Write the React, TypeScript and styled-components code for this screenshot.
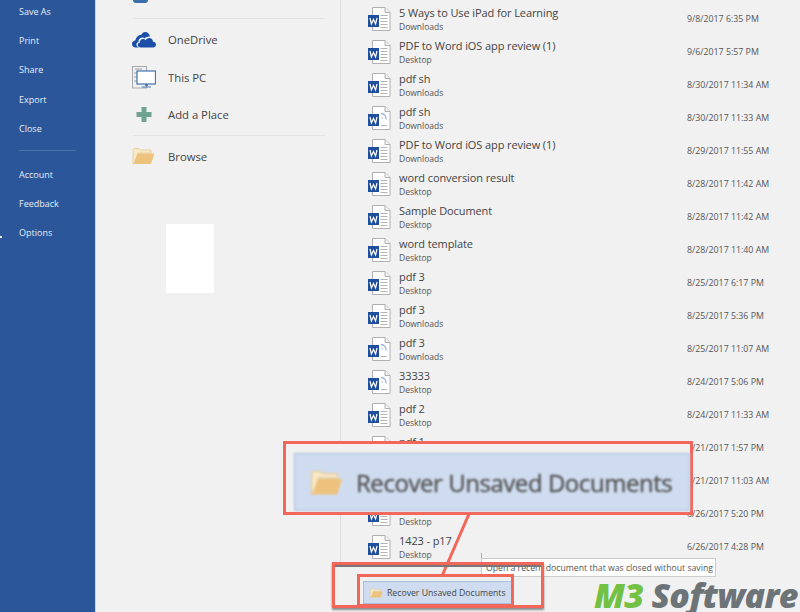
import React from 'react'
import styled, { createGlobalStyle } from 'styled-components'

const GlobalStyle = createGlobalStyle`
  html, body {
    margin: 0;
    padding: 0;
    background: #f1f1f1;
  }
  * {
    box-sizing: border-box;
  }
`

interface RecentFile {
  name: string
  folder: string
  date: string
  pending?: boolean
}

const files: RecentFile[] = [
  { name: '5 Ways to Use iPad for Learning', folder: 'Downloads', date: '9/8/2017 6:35 PM' },
  { name: 'PDF to Word iOS app review (1)', folder: 'Desktop', date: '9/6/2017 5:57 PM' },
  { name: 'pdf sh', folder: 'Downloads', date: '8/30/2017 11:34 AM' },
  { name: 'pdf sh', folder: 'Downloads', date: '8/30/2017 11:33 AM', pending: true },
  { name: 'PDF to Word iOS app review (1)', folder: 'Downloads', date: '8/29/2017 11:55 AM' },
  { name: 'word conversion result', folder: 'Desktop', date: '8/28/2017 11:42 AM' },
  { name: 'Sample Document', folder: 'Desktop', date: '8/28/2017 11:42 AM' },
  { name: 'word template', folder: 'Desktop', date: '8/28/2017 11:40 AM' },
  { name: 'pdf 3', folder: 'Desktop', date: '8/25/2017 6:17 PM' },
  { name: 'pdf 3', folder: 'Downloads', date: '8/25/2017 5:36 PM' },
  { name: 'pdf 3', folder: 'Downloads', date: '8/25/2017 11:07 AM', pending: true },
  { name: '33333', folder: 'Desktop', date: '8/24/2017 5:06 PM', pending: true },
  { name: 'pdf 2', folder: 'Desktop', date: '8/24/2017 11:33 AM' },
  { name: 'pdf 1', folder: 'Desktop', date: '8/21/2017 1:57 PM' },
  { name: 'pdf 1', folder: 'Desktop', date: '8/21/2017 11:03 AM' },
  { name: '1423 - p18', folder: 'Desktop', date: '6/26/2017 5:20 PM' },
  { name: '1423 - p17', folder: 'Desktop', date: '6/26/2017 4:28 PM' },
]

const WordIcon = ({ pending }: { pending?: boolean }) => (
  <svg width="23" height="24" viewBox="0 0 23 24">
    <path d="M4.500 .5H17L22 5.500V23.500H4.500Z" fill="#fff" stroke="#b0b0b0" />
    <path d="M17 .5V5.500H22" fill="#f1f1f1" stroke="#b0b0b0" />
    {pending ? (
      <>
        <path d="M13 7.500a5 5 0 0 1 5 6" fill="none" stroke="#9db4de" strokeWidth="1.300" />
        <path d="M13 11a2 2 0 0 1 2 2" fill="none" stroke="#c3d0ea" />
        <path d="M13 19.500h6" stroke="#b4b4b4" />
      </>
    ) : (
      <path d="M12.500 8.500h7M12.500 11.500h7M12.500 14.500h7M12.500 17.500h7M12.500 20.500h7" stroke="#b4b4b4" />
    )}
    <rect x="0" y="8" width="11" height="12" fill="#1f4e9c" />
    <path d="M2 11L3.400 17L5.500 12.500L7.600 17L9 11" fill="none" stroke="#fff" strokeWidth="1.200" />
  </svg>
)

const FolderIcon = ({ width, height }: { width: number; height: number }) => (
  <svg width={width} height={height} viewBox="0 0 23 18" preserveAspectRatio="none">
    <path d="M1 17V3L2 1.500H7L8.500 3H19V6H6L3 16Z" fill="#f7e8c8" stroke="#e4c48c" strokeWidth=".7" />
    <path d="M1.500 17L5.500 6.500H22.500L19 17Z" fill="#edc27d" />
  </svg>
)

const App = () => (
  <>
    <GlobalStyle />
    <Page>
      <Sidebar>
        <NavItem>Save As</NavItem>
        <NavItem>Print</NavItem>
        <NavItem>Share</NavItem>
        <NavItem>Export</NavItem>
        <NavItem>Close</NavItem>
        <NavDivider />
        <NavItem>Account</NavItem>
        <NavItem>Feedback</NavItem>
        <NavItem>Options</NavItem>
      </Sidebar>
      <Places>
        <TopIconStub />
        <PlaceDivider />
        <PlaceRow>
          <PlaceIcon>
            <svg width="24" height="16" viewBox="0 0 24 16">
              <path
                d="M7.500 15.500H3.500C1.500 15.500 0 14 0 12C0 10 1.500 8.500 3.500 8.300C4 5 6.500 3 9 3C9.800 1.500 11.300 0 13 0C15.500 0 17.500 1.800 18 4.500C16 4.200 14 5 12.800 6.300C11.500 5.300 9.800 5.200 8.500 6C7 7 6.300 8.500 6.500 10C5 10.300 4.200 11.500 4.500 13C4.700 14.500 6 15.500 7.500 15.500Z"
                fill="#1d4fa8"
              />
              <path
                d="M9 15.500C6.800 15.500 5.700 14.300 5.700 12.800C5.700 11.500 6.700 10.800 7.800 10.800C7.600 8.500 9.300 7 11 7C12.200 7 13 7.500 13.600 8.200C14.500 6.800 15.800 6 17 6C19.300 6 21 7.700 21 9.800C22.800 9.800 24 11 24 12.700C24 14.300 22.800 15.500 21 15.500Z"
                fill="#1d4fa8"
              />
            </svg>
          </PlaceIcon>
          <PlaceLabel>OneDrive</PlaceLabel>
        </PlaceRow>
        <PlaceRow>
          <PlaceIcon>
            <svg width="24" height="23" viewBox="0 0 24 23">
              <rect x=".5" y=".5" width="14" height="21.500" fill="#f1f1f1" stroke="#a8a8a8" />
              <path d="M3 3h7M2 7h3M2 11h3M2 15h3" stroke="#9a9a9a" />
              <rect x="5" y="5" width="18.500" height="13" fill="#fff" stroke="#4c7cb0" strokeWidth="1.300" />
              <path d="M13 18h3v2h-3zM10 20.500h9v1h-9z" fill="#4c7cb0" />
            </svg>
          </PlaceIcon>
          <PlaceLabel>This PC</PlaceLabel>
        </PlaceRow>
        <AddRow>
          <PlaceIcon>
            <svg width="24" height="15" viewBox="0 0 24 15">
              <path d="M9.500 0h5v5H19.500v5H14.500v5h-5V10H4.500V5H9.500Z" fill="#6fa391" />
            </svg>
          </PlaceIcon>
          <PlaceLabel>Add a Place</PlaceLabel>
        </AddRow>
        <PlaceDivider />
        <BrowseRow>
          <PlaceIcon>
            <FolderIcon width={23} height={18} />
          </PlaceIcon>
          <PlaceLabel>Browse</PlaceLabel>
        </BrowseRow>
        <BlankSheet />
      </Places>
      <Recent>
        {files.map((file, i) => (
          <FileRow key={i}>
            <WordIcon pending={file.pending} />
            <FileText>
              <FileName>{file.name}</FileName>
              <FileFolder>{file.folder}</FileFolder>
            </FileText>
            <FileDate>{file.date}</FileDate>
          </FileRow>
        ))}
      </Recent>

      <Callout>
        <ZoomedButton>
          <FolderIcon width={33} height={27} />
          <ZoomedLabel>Recover Unsaved Documents</ZoomedLabel>
        </ZoomedButton>
      </Callout>
      <Connector width="40" height="66" viewBox="0 0 40 66">
        <path d="M31 0L4 62" stroke="#f2675a" strokeWidth="3" />
      </Connector>
      <Tooltip>Open a recent document that was closed without saving</Tooltip>
      <OuterMark />
      <RecoverButton>
        <FolderIcon width={13} height={10} />
        <RecoverLabel>Recover Unsaved Documents</RecoverLabel>
      </RecoverButton>
      <InnerMark />
      <Logo>
        <LogoGreen>M3</LogoGreen> Software
      </Logo>
    </Page>
  </>
)

export default App

const Page = styled.div`
  position: relative;
  display: flex;
  width: 800px;
  height: 612px;
  overflow: hidden;
  background: #f1f1f1;
  font-family: 'Open Sans', 'Liberation Sans', sans-serif;
`

const Sidebar = styled.nav`
  position: relative;
  width: 96px;
  flex-shrink: 0;
  display: flex;
  flex-direction: column;
  padding: 1px 0 0 19px;
  background: #2b579a;
  border-right: 1px solid #c9d3e2;

  &::after {
    content: '';
    position: absolute;
    left: 0;
    top: 236px;
    width: 2px;
    height: 2px;
    background: #fff;
  }
`

const NavItem = styled.div`
  height: 29.2px;
  margin-top: -3px;
  padding-top: 3px;
  margin-bottom: 3px;
  line-height: 22px;
  font-size: 9px;
  color: #e6edf6;
`

const NavDivider = styled.div`
  width: 57px;
  height: 1px;
  margin: 3px 0 13px;
  background: #4a72ae;
`

const Places = styled.section`
  width: 244px;
  flex-shrink: 0;
  padding: 0 15px 0 37px;
`

const TopIconStub = styled.div`
  width: 15px;
  height: 3px;
  margin-bottom: 15px;
  border-radius: 0 0 6px 6px;
  background: #3a6ea8;
`

const PlaceDivider = styled.div`
  height: 1px;
  margin-bottom: 2px;
  background: #e2e2e2;
`

const PlaceRow = styled.div`
  display: flex;
  align-items: center;
  height: 37.500px;
  color: #444;
`

const AddRow = styled(PlaceRow)`
  margin-bottom: 1px;
`

const BrowseRow = styled(PlaceRow)`
  margin-top: 2px;
`

const PlaceIcon = styled.div`
  width: 36px;
  margin-left: -1px;
  display: flex;
  align-items: center;
`

const PlaceLabel = styled.span`
  font-size: 11.300px;
`

const BlankSheet = styled.div`
  width: 48px;
  height: 69px;
  margin: 49px 0 0 33px;
  background: #fff;
`

const Recent = styled.section`
  flex: 1;
  height: 566px;
  padding: 2.500px 0 0 27px;
  border-left: 1px solid #dedede;
`

const FileRow = styled.div`
  display: flex;
  align-items: center;
  height: 33px;
`

const FileText = styled.div`
  width: 288px;
  margin-left: 8px;
  display: flex;
  flex-direction: column;
`

const FileName = styled.div`
  font-size: 11px;
  letter-spacing: -0.1px;
  line-height: 14px;
  color: #444;
`

const FileFolder = styled.div`
  margin-top: 1px;
  font-size: 8.500px;
  line-height: 12px;
  color: #555;
`

const FileDate = styled.div`
  font-size: 8.800px;
  white-space: nowrap;
  color: #555;
`

const Callout = styled.div`
  position: absolute;
  left: 283px;
  top: 441px;
  width: 410px;
  height: 74px;
  padding: 9px 0 0 8px;
  background: #f1f1f1;
  border: 3px solid #f2675a;
`

const ZoomedButton = styled.div`
  display: flex;
  align-items: center;
  gap: 13px;
  height: 58px;
  padding-left: 15px;
  background: #cfdcf0;
  border: 1px solid #a9bfde;
  filter: blur(0.9px);
`

const ZoomedLabel = styled.span`
  font-size: 24px;
  letter-spacing: -0.45px;
  white-space: nowrap;
  color: #555;
  -webkit-text-stroke: 0.4px #555;
`

const Connector = styled.svg`
  position: absolute;
  left: 438px;
  top: 514px;
`

const OuterMark = styled.div`
  position: absolute;
  left: 332px;
  top: 562px;
  width: 212px;
  height: 46px;
  border: 3px solid #f2675a;
  box-shadow: inset 0 2px 0 #777, 0 2px 2px #8a8a8a;
`

const InnerMark = styled.div`
  position: absolute;
  left: 357px;
  top: 574px;
  width: 157px;
  height: 33px;
  border: 3px solid #f2675a;
`

const RecoverButton = styled.div`
  position: absolute;
  left: 363px;
  top: 581px;
  width: 149px;
  height: 23px;
  display: flex;
  align-items: center;
  gap: 4px;
  padding-left: 6px;
  background: #cfdcf0;
  border: 1px solid #a9bfde;
`

const RecoverLabel = styled.span`
  font-size: 8.700px;
  white-space: nowrap;
  color: #444;
`

const Tooltip = styled.div`
  position: absolute;
  left: 481px;
  top: 558px;
  width: 235px;
  height: 19px;
  padding: 0 4px;
  line-height: 18px;
  font-size: 8.700px;
  white-space: nowrap;
  color: #555;
  background: #fff;
  border: 1px solid #ccc;

  &::before {
    content: '';
    position: absolute;
    left: -1px;
    top: -6px;
    width: 1px;
    height: 5px;
    background: #aaa;
  }
`

const Logo = styled.div`
  position: absolute;
  left: 594px;
  top: 578px;
  font-family: 'Open Sans', Lato, sans-serif;
  font-size: 34px;
  line-height: 34px;
  font-weight: 800;
  font-style: italic;
  letter-spacing: -0.7px;
  white-space: nowrap;
  color: #6d7478;
`

const LogoGreen = styled.span`
  color: #72c144;
`
